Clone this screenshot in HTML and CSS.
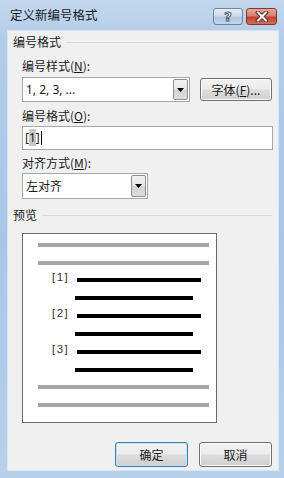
FILE: index.html
```html
<!DOCTYPE html>
<html lang="zh-CN">
<head>
<meta charset="utf-8">
<link rel="stylesheet" href="styles.css">
</head>
<body>
<div class="window">
  <div class="titlebar">
    <div class="title">定义新编号格式</div>
    <div class="caption-btns">
      <div class="cbtn help"><span class="qmark">?</span></div>
      <div class="cbtn close">
        <svg width="14" height="11" viewBox="0 0 14 11">
          <path d="M3 1.5 L11 9.5 M11 1.5 L3 9.5" stroke="#5a2a24" stroke-width="4" stroke-linecap="square"/>
          <path d="M3 1.5 L11 9.5 M11 1.5 L3 9.5" stroke="#ffffff" stroke-width="2" stroke-linecap="square"/>
        </svg>
      </div>
    </div>
  </div>
  <div class="client">
    <div class="group-head"><span>编号格式</span><div class="sep"></div></div>
    <div class="label l1">编号样式(<u>N</u>):</div>
    <div class="row r1">
      <div class="combo combo-wide">
        <span class="combo-text latin">1, 2, 3, ...</span>
        <div class="drop"><svg width="7" height="4" viewBox="0 0 7 4"><path d="M0 0 H7 L3.5 4 Z" fill="#000"/></svg></div>
      </div>
      <div class="btn font-btn">字体(<u>F</u>)...</div>
    </div>
    <div class="label l2">编号格式(<u>O</u>):</div>
    <div class="textbox"><span class="latin">[<span class="sel">1</span>]</span><span class="caret"></span></div>
    <div class="label l3">对齐方式(<u>M</u>):</div>
    <div class="combo combo-align">
      <span class="combo-text">左对齐</span>
      <div class="drop"><svg width="7" height="4" viewBox="0 0 7 4"><path d="M0 0 H7 L3.5 4 Z" fill="#000"/></svg></div>
    </div>
    <div class="group-head g2"><span>预览</span><div class="sep"></div></div>
    <div class="preview">
      <div class="pl"><div class="gray"></div></div>
      <div class="pl"><div class="gray"></div></div>
      <div class="pl"><span class="num">[1]</span><div class="black long"></div></div>
      <div class="pl"><div class="black short"></div></div>
      <div class="pl"><span class="num">[2]</span><div class="black long"></div></div>
      <div class="pl"><div class="black short"></div></div>
      <div class="pl"><span class="num">[3]</span><div class="black long"></div></div>
      <div class="pl"><div class="black short"></div></div>
      <div class="pl"><div class="gray"></div></div>
      <div class="pl"><div class="gray"></div></div>
    </div>
    <div class="buttons">
      <div class="btn ok">确定</div>
      <div class="btn cancel">取消</div>
    </div>
  </div>
</div>
</body>
</html>
```
FILE: styles.css
```css
* { box-sizing: border-box; }
html, body { margin: 0; padding: 0; }
body {
  width: 284px;
  height: 478px;
  overflow: hidden;
  font-family: "Noto Sans CJK SC", "Noto Sans", sans-serif;
  font-size: 12px;
  color: #1a1a1a;
}
.latin { font-family: "Noto Sans", "Noto Sans CJK SC", sans-serif; }
u { text-decoration: underline; text-underline-offset: 1px; }

.window {
  width: 284px;
  height: 478px;
  display: flex;
  flex-direction: column;
  background: linear-gradient(180deg, #c4d8ee 0%, #b3cde9 8%, #a9c6e7 50%, #b7d0ec 100%);
  padding: 0 5px 7px 7px;
}
.titlebar {
  height: 30px;
  display: flex;
  align-items: flex-start;
  justify-content: space-between;
  flex: none;
}
.title {
  margin-top: 7px;
  margin-left: 3px;
  font-size: 12.5px;
  line-height: 16px;
  color: #151a22;
}
.caption-btns {
  display: flex;
  gap: 3px;
  margin-top: 8px;
  margin-right: 2px;
}
.cbtn {
  height: 17px;
  border-radius: 3px;
  display: flex;
  align-items: center;
  justify-content: center;
}
.help {
  width: 30px;
  border: 1px solid #6f839c;
  background: linear-gradient(180deg, #e4ecf6 0%, #cddbeb 45%, #b3c6dd 55%, #c3d4e8 100%);
}
.qmark {
  font-family: "DejaVu Sans", sans-serif;
  font-weight: bold;
  font-size: 13px;
  line-height: 13px;
  color: #ffffff;
  -webkit-text-stroke: 1px #4a5a70;
}
.close {
  width: 31px;
  border: 1px solid #7e3a32;
  background: linear-gradient(180deg, #e9a899 0%, #d88070 45%, #c5432f 55%, #d0705c 100%);
}

.client {
  flex: 1;
  background: #f0f0f0;
  border: 1px solid #d9e4f1;
  padding: 4px 6px 0 4px;
  display: flex;
  flex-direction: column;
}
.group-head {
  display: flex;
  align-items: center;
  height: 14px;
  line-height: 14px;
  margin-left: 1px;
}
.group-head .sep {
  flex: 1;
  height: 1px;
  background: #d5d9de;
  margin-left: 6px;
}
.g2 { margin-top: 9px; }
.label {
  height: 14px;
  line-height: 14px;
  margin-left: 10px;
}
.l1 { margin-top: 10px; }
.l2 { margin-top: 7px; }
.l3 { margin-top: 6px; }

.row {
  display: flex;
  align-items: flex-start;
  margin-left: 10px;
  margin-top: 4px;
}
.combo {
  background: #fff;
  border: 1px solid #a3a6ab;
  display: flex;
  align-items: center;
  padding: 1px 1px 1px 2px;
}
.combo-wide { width: 168px; height: 25px; }
.combo-align { width: 126px; height: 26px; margin-left: 10px; margin-top: 3px; }
.combo-text { flex: 1; padding-left: 1px; line-height: 14px; }
.drop {
  width: 15px;
  align-self: stretch;
  border: 1px solid #8b8d90;
  border-radius: 2px;
  background: linear-gradient(180deg, #f3f3f3 0%, #e6e6e6 50%, #d4d4d4 51%, #dcdcdc 100%);
  display: flex;
  align-items: center;
  justify-content: center;
}
.btn {
  border: 1px solid #707070;
  border-radius: 3px;
  background: linear-gradient(180deg, #f2f2f2 0%, #ebebeb 48%, #dddddd 52%, #cfcfcf 100%);
  box-shadow: inset 0 0 0 1px #fbfbfb;
  display: flex;
  align-items: center;
  justify-content: center;
  color: #1a1a1a;
}
.font-btn {
  width: 72px;
  height: 23px;
  margin-left: 10px;
  margin-top: 1px;
}
.textbox {
  margin-left: 10px;
  margin-top: 3px;
  width: 251px;
  height: 24px;
  background: #fff;
  border: 1px solid #a3a6ab;
  display: flex;
  align-items: center;
  padding-left: 2px;
  line-height: 14px;
}
.sel { background: #c8c8c8; }
.caret {
  width: 1px;
  height: 14px;
  background: #000;
  margin-left: 1px;
}

.preview {
  margin-top: 11px;
  margin-left: 10px;
  width: 195px;
  height: 190px;
  background: #fff;
  border: 1px solid #6b6b6b;
  padding: 2px 0 8px 15px;
  display: flex;
  flex-direction: column;
}
.pl {
  height: 18px;
  display: flex;
  align-items: center;
}
.gray {
  width: 171px;
  height: 4px;
  background: #a6a6a6;
}
.num {
  width: 25px;
  margin-left: 14px;
  font-family: "Liberation Sans", sans-serif;
  font-size: 11.5px;
  letter-spacing: 1.5px;
  color: #303030;
  line-height: 12px;
  padding-bottom: 6px;
}
.black { height: 4px; background: #000; }
.long { width: 124px; }
.short { width: 118px; margin-left: 37px; }

.buttons {
  display: flex;
  justify-content: flex-end;
  gap: 11px;
  margin-top: 19px;
  margin-right: 0px;
}
.buttons .btn { width: 73px; height: 25px; }
.ok {
  border-color: #3c7fb1;
  box-shadow: inset 0 0 0 1px #bfe3f7;
}
```
